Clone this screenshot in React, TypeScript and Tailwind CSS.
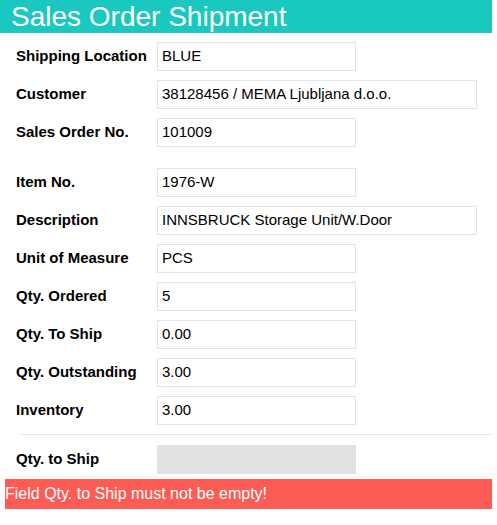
import React from "react";

type Row = { label: string; value: string; wide?: boolean };

const group1: Row[] = [
  { label: "Shipping Location", value: "BLUE" },
  { label: "Customer", value: "38128456 / MEMA Ljubljana d.o.o.", wide: true },
  { label: "Sales Order No.", value: "101009" },
];

const group2: Row[] = [
  { label: "Item No.", value: "1976-W" },
  { label: "Description", value: "INNSBRUCK Storage Unit/W.Door", wide: true },
  { label: "Unit of Measure", value: "PCS" },
  { label: "Qty. Ordered", value: "5" },
  { label: "Qty. To Ship", value: "0.00" },
  { label: "Qty. Outstanding", value: "3.00" },
  { label: "Inventory", value: "3.00" },
];

function Field({ row }: { row: Row }) {
  return (
    <div className="flex items-center h-[29px]">
      <div className="w-[157px] pl-4 font-bold text-[15px] text-black">{row.label}</div>
      <div
        className={`h-[29px] border border-[#e3e3e3] flex items-center pl-1 text-[15px] text-black ${
          row.wide ? "w-[320px]" : "w-[199px]"
        }`}
      >
        {row.value}
      </div>
    </div>
  );
}

export default function App() {
  return (
    <div className="w-[497px] h-[525px] bg-white" style={{ fontFamily: '"Liberation Sans", Arial, sans-serif' }}>
      <div className="w-[492px] h-[33px] bg-[#19c8be] text-white text-[28px] leading-[33px] pl-[11px]">
        Sales Order Shipment
      </div>
      <div className="flex flex-col gap-[9px] pt-[9px]">
        {group1.map((r) => (
          <Field key={r.label} row={r} />
        ))}
      </div>
      <div className="flex flex-col gap-[9px] pt-[21px]">
        {group2.map((r) => (
          <Field key={r.label} row={r} />
        ))}
      </div>
      <div className="ml-5 w-[472px] h-px bg-[#e6e6e6] mt-[9px]" />
      <div className="flex items-center h-[29px] mt-[10px]">
        <div className="w-[157px] pl-4 font-bold text-[15px] text-black">Qty. to Ship</div>
        <div className="h-[29px] w-[199px] bg-[#e2e2e2]" />
      </div>
      <div className="ml-[5px] mt-[5px] w-[487px] h-[30px] bg-[#fc5c54] text-white text-[16px] leading-[30px]">
        Field Qty. to Ship must not be empty!
      </div>
    </div>
  );
}
